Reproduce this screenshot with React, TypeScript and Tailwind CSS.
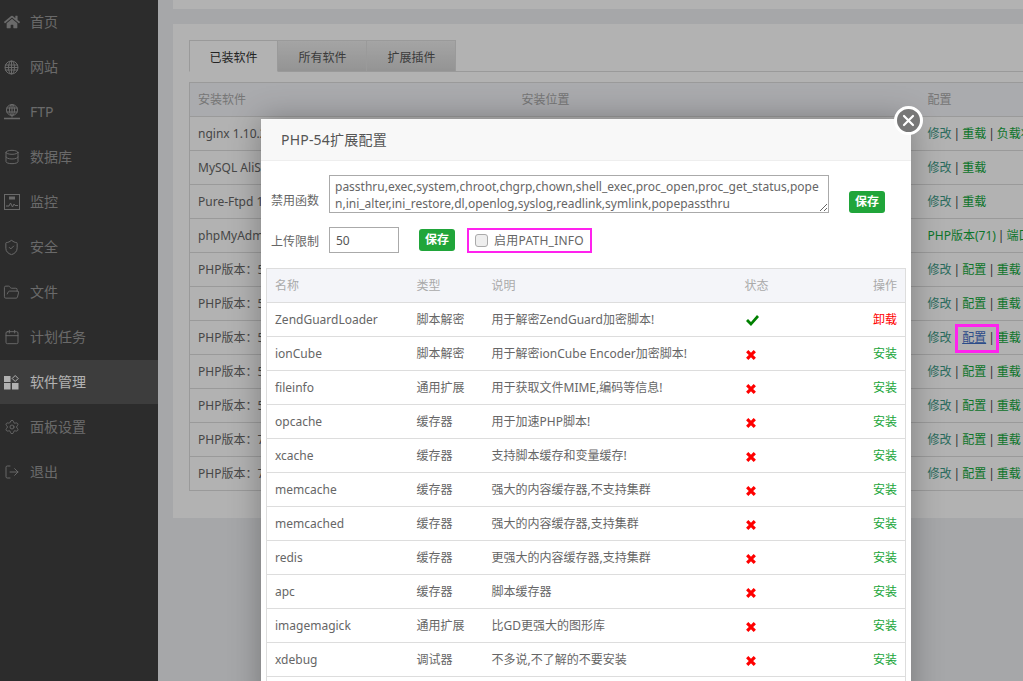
import { Database, ShieldCheck, FolderOpen, Calendar, Settings, LogOut } from 'lucide-react';
import { FaHome } from 'react-icons/fa';

const font = "font-['Noto_Sans','Noto_Sans_CJK_SC',sans-serif]";

function GlobeIcon() {
  return (
    <svg width="15" height="15" viewBox="0 0 15 15" fill="none" stroke="currentColor" strokeWidth="1">
      <circle cx="7.5" cy="7.5" r="6.5" />
      <ellipse cx="7.5" cy="7.5" rx="3" ry="6.5" />
      <path d="M1 5h13M1 7.5h13M1 10h13M7.5 1v13" />
    </svg>
  );
}

function FtpIcon() {
  return (
    <svg width="16" height="16" viewBox="0 0 16 16" fill="none" stroke="currentColor" strokeWidth="1">
      <circle cx="8" cy="6" r="5.5" />
      <ellipse cx="8" cy="6" rx="2.5" ry="5.5" />
      <path d="M2.500 4h11M2.500 8h11M8 .5v11M8 11.500v2" />
      <path d="M0 14.500h16" strokeWidth="1.5" />
    </svg>
  );
}

function MonitorIcon() {
  return (
    <svg width="16" height="16" viewBox="0 0 16 16" fill="none" stroke="currentColor" strokeWidth="1">
      <rect x="0.5" y="0.5" width="15" height="15" />
      <rect x="5" y="2.5" width="6" height="3" fill="currentColor" stroke="none" />
      <path d="M2 12h3l1.500-3 2 4 1.500-3 1 1.500h3" />
    </svg>
  );
}

function SoftIcon() {
  return (
    <svg width="15" height="15" viewBox="0 0 15 15" fill="currentColor">
      <rect x="0" y="1" width="6.5" height="6" />
      <rect x="0" y="8" width="6.5" height="6.5" />
      <rect x="8" y="8" width="6.5" height="6.5" />
      <path d="M11.200 0.5l3 3-3 3-3-3z" fill="none" stroke="currentColor" />
    </svg>
  );
}

const menu = [
  { name: '首页', icon: <FaHome size={16} /> },
  { name: '网站', icon: <GlobeIcon /> },
  { name: 'FTP', icon: <FtpIcon /> },
  { name: '数据库', icon: <Database size={16} strokeWidth={1.4} /> },
  { name: '监控', icon: <MonitorIcon /> },
  { name: '安全', icon: <ShieldCheck size={17} strokeWidth={1.4} /> },
  { name: '文件', icon: <FolderOpen size={17} strokeWidth={1.3} /> },
  { name: '计划任务', icon: <Calendar size={16} strokeWidth={1.4} /> },
  { name: '软件管理', icon: <SoftIcon />, active: true },
  { name: '面板设置', icon: <Settings size={16} strokeWidth={1.3} /> },
  { name: '退出', icon: <LogOut size={16} strokeWidth={1.4} /> },
];

const software = [
  { name: 'nginx 1.10.2', path: '/www/server/nginx', ops: ['修改', '重载', '负载状态'] },
  { name: 'MySQL AliSQL 5.6', path: '/www/server/mysql', ops: ['修改', '重载'] },
  { name: 'Pure-Ftpd 1.0.43', path: '/www/server/pure-ftpd', ops: ['修改', '重载'] },
  { name: 'phpMyAdmin 4.4', path: '/www/server/phpmyadmin', ops: ['PHP版本(71)', '端口'] },
  { name: 'PHP版本：5.2', path: '/www/server/php/52', ops: ['修改', '配置', '重载', '负载状态'] },
  { name: 'PHP版本：5.3', path: '/www/server/php/53', ops: ['修改', '配置', '重载', '负载状态'] },
  { name: 'PHP版本：5.4', path: '/www/server/php/54', ops: ['修改', '配置', '重载', '负载状态'], focus: true },
  { name: 'PHP版本：5.5', path: '/www/server/php/55', ops: ['修改', '配置', '重载', '负载状态'] },
  { name: 'PHP版本：5.6', path: '/www/server/php/56', ops: ['修改', '配置', '重载', '负载状态'] },
  { name: 'PHP版本：7.0', path: '/www/server/php/70', ops: ['修改', '配置', '重载', '负载状态'] },
  { name: 'PHP版本：7.1', path: '/www/server/php/71', ops: ['修改', '配置', '重载', '负载状态'] },
];

const extensions = [
  ['ZendGuardLoader', '脚本解密', '用于解密ZendGuard加密脚本!'],
  ['ionCube', '脚本解密', '用于解密ionCube Encoder加密脚本!'],
  ['fileinfo', '通用扩展', '用于获取文件MIME,编码等信息!'],
  ['opcache', '缓存器', '用于加速PHP脚本!'],
  ['xcache', '缓存器', '支持脚本缓存和变量缓存!'],
  ['memcache', '缓存器', '强大的内容缓存器,不支持集群'],
  ['memcached', '缓存器', '强大的内容缓存器,支持集群'],
  ['redis', '缓存器', '更强大的内容缓存器,支持集群'],
  ['apc', '缓存器', '脚本缓存器'],
  ['imagemagick', '通用扩展', '比GD更强大的图形库'],
  ['xdebug', '调试器', '不多说,不了解的不要安装'],
  ['', '', ''],
];

function CheckMark() {
  return (
    <svg width="13" height="11" viewBox="0 0 13 11" fill="#008000">
      <path d="M0 6l2-2 3 3 6-7 2 2-8 9z" />
    </svg>
  );
}

function CrossMark() {
  return (
    <svg width="10" height="10" viewBox="0 0 10 10" fill="none" stroke="#ff0000" strokeWidth="3.2">
      <path d="M1.200 1.200l7.600 7.600M8.800 1.200l-7.600 7.600" />
    </svg>
  );
}

export default function App() {
  return (
    <div className={`relative flex h-[681px] w-[1023px] overflow-hidden bg-[#eeeff3] text-xs text-[#666] ${font}`}>
      {/* 左侧菜单 */}
      <div className="w-[158px] shrink-0 self-stretch bg-[#404040]">
        {menu.map(item => (
          <div
            key={item.name}
            className={`mb-px flex h-[44px] items-center text-sm ${item.active ? 'bg-[#585858] text-white' : 'text-[#999]'}`}
          >
            <span className="flex w-[30px] shrink-0 justify-center pr-[7px]">{item.icon}</span>
            {item.name}
          </div>
        ))}
      </div>

      {/* 软件列表 */}
      <div className="ml-[15px] w-[1100px] shrink-0">
        <div className="h-[9px] bg-white" />
        <div className="mt-[15px] bg-white px-4 pb-[27px] pt-4">
          <div className="flex h-[32px] border-b border-[#ddd]">
            {['已装软件', '所有软件', '扩展插件'].map((tab, i) => (
              <div
                key={tab}
                className={`-mb-px flex w-[89px] items-center justify-center border border-[#ddd] pt-1 text-xs ${i === 0 ? 'border-b-white bg-white text-[#333]' : 'border-l-0 bg-linear-to-b from-[#ececec] to-[#d4d4d4] pl-px text-[#555]'}`}
              >
                {tab}
              </div>
            ))}
          </div>
          <table className="mt-[10px] w-full table-fixed border border-[#ddd]">
            <thead>
              <tr className="h-[34px] bg-[#f4f5f9] text-left text-[#aaa]">
                <th className="w-[324px] pl-2 pt-px font-normal">安装软件</th>
                <th className="w-[406px] pl-2 pt-px font-normal">安装位置</th>
                <th className="pl-2 pt-px font-normal">配置</th>
              </tr>
            </thead>
            <tbody>
              {software.map(row => (
                <tr key={row.name} className="h-[34px] border-t border-[#ddd]">
                  <td className="pl-2">{row.name}</td>
                  <td className="pl-2">{row.path}</td>
                  <td className="whitespace-nowrap pl-2 text-[#444]">
                    {row.ops.map((op, i) => (
                      <span key={op}>
                        {i > 0 && <span className="mx-[2px]">|</span>}
                        <span
                          className={
                            row.focus && op === '配置'
                              ? 'text-[#3f6dc5] underline'
                              : i === 0 && op === '修改'
                                ? 'text-[#3d9a86]'
                                : 'text-[#12a83c]'
                          }
                        >
                          {op}
                        </span>
                      </span>
                    ))}
                  </td>
                </tr>
              ))}
            </tbody>
          </table>
        </div>
      </div>

      {/* 遮罩 */}
      <div className="absolute inset-0 bg-black/30" />
      <div className="absolute left-[955px] top-[324px] h-[29px] w-[44px] border-[3px] border-[#ff22ee]" />

      {/* 弹窗 */}
      <div className="absolute left-[261px] top-[119px] w-[650px] bg-white shadow-[0_0_30px_rgba(0,0,0,0.3)]">
        <div className="flex h-[42px] items-center border-b border-[#eee] bg-[#f8f8f8] pl-5 text-sm tracking-[0.2px] text-[#555]">
          PHP-54扩展配置
        </div>
        <div className="mt-[14px] flex items-end pl-[10px]">
          <span className="w-[58px] pb-[4px]">禁用函数</span>
          <textarea
            readOnly
            className="h-[38px] w-[500px] break-all border border-[#aaa] px-[5px] py-[2px] text-xs leading-[17px] text-[#666] outline-none"
            value="passthru,exec,system,chroot,chgrp,chown,shell_exec,proc_open,proc_get_status,popen,ini_alter,ini_restore,dl,openlog,syslog,readlink,symlink,popepassthru"
          />
          <button className="ml-5 h-[22px] w-[36px] rounded-[3px] bg-[#20a53a] text-xs font-bold text-white">保存</button>
        </div>
        <div className="mt-[14px] flex items-center pl-[10px]">
          <span className="w-[58px] pt-[3px]">上传限制</span>
          <input readOnly value="50" className="h-[26px] w-[70px] border border-[#aaa] px-[6px] text-xs text-[#555] outline-none" />
          <button className="ml-5 h-[22px] w-[36px] rounded-[3px] bg-[#20a53a] text-xs font-bold text-white">保存</button>
          <label className="ml-3 flex h-[25px] w-[125px] items-center border-2 border-[#ff22ee] pl-[6px] text-[#666]">
            <input type="checkbox" readOnly className="h-[13px] w-[13px] appearance-none rounded-[3px] border border-[#aaa] bg-[#eee]" />
            <span className="ml-[6px] pt-px tracking-[0.25px]">启用PATH_INFO</span>
          </label>
        </div>
        <div className="mx-[5px] mt-[15px]">
          <table className="w-full table-fixed border border-[#ddd]">
            <thead>
              <tr className="h-[34px] bg-[#f4f5f9] text-left text-[#aaa]">
                <th className="w-[142px] pl-2 pt-px font-normal">名称</th>
                <th className="w-[75px] pl-2 pt-px font-normal">类型</th>
                <th className="w-[253px] pl-2 pt-px font-normal">说明</th>
                <th className="pl-2 pt-px font-normal">状态</th>
                <th className="pr-2 pt-px text-right font-normal">操作</th>
              </tr>
            </thead>
            <tbody>
              {extensions.map((ext, i) => (
                <tr key={i} className="h-[34px] border-t border-[#ddd]">
                  <td className="pl-2">{ext[0]}</td>
                  <td className="pl-2">{ext[1]}</td>
                  <td className="pl-2">{ext[2]}</td>
                  <td className="pl-2">
                    {ext[0] && <span className="ml-px inline-block pt-[6px]">{i === 0 ? <CheckMark /> : <CrossMark />}</span>}
                  </td>
                  <td className={`pr-2 text-right ${i === 0 ? 'text-[#ff0000]' : 'text-[#20a53a]'}`}>
                    {ext[0] && (i === 0 ? '卸载' : '安装')}
                  </td>
                </tr>
              ))}
            </tbody>
          </table>
        </div>
      </div>

      {/* 关闭按钮 */}
      <div className="absolute left-[894px] top-[106px] flex h-[29px] w-[29px] items-center justify-center rounded-full border-[3px] border-white bg-[#777]">
        <svg width="13" height="13" viewBox="0 0 13 13" stroke="white" strokeWidth="2.2" strokeLinecap="round">
          <path d="M2 2l9 9M11 2l-9 9" />
        </svg>
      </div>
    </div>
  );
}
